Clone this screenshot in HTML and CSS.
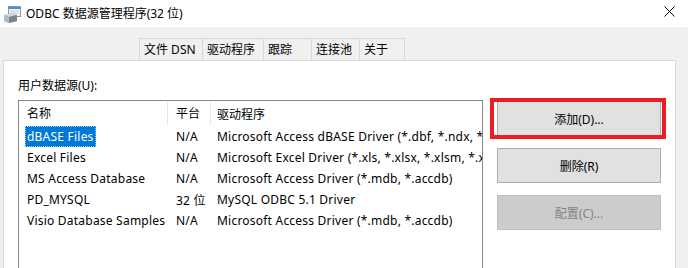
FILE: index.html
```html
<!DOCTYPE html>
<html lang="zh-CN">
<head>
<meta charset="utf-8">
<title>ODBC 数据源管理程序(32 位)</title>
<link rel="stylesheet" href="styles.css">
</head>
<body>
<div class="window">
  <div class="titlebar">
    <svg class="app-icon" width="19" height="17" viewBox="0 0 19 17">
      <rect x="5.5" y="0.5" width="12" height="10" fill="#f4f6f8" stroke="#8a96a3"/>
      <rect x="6" y="1" width="11" height="2" fill="#4a8fd6"/>
      <line x1="7" y1="5" x2="16" y2="5" stroke="#c4ccd4"/>
      <line x1="7" y1="7" x2="16" y2="7" stroke="#c4ccd4"/>
      <path d="M1 9 L9 7 L14 9 L14 15 L6 17 L1 15 Z" fill="#9aa2ab"/>
      <path d="M1 9 L9 7 L14 9 L6 11 Z" fill="#d3d8dd"/>
      <path d="M6 11 L14 9 L14 15 L6 17 Z" fill="#7b838c"/>
      <path d="M1 9 L6 11 L6 17 L1 15 Z" fill="#b2b9c0"/>
    </svg>
    <span class="title">ODBC 数据源管理程序(32 位)</span>
    <svg class="close" width="11" height="11" viewBox="0 0 11 11">
      <path d="M0.5 0.5 L10.5 10.5 M10.5 0.5 L0.5 10.5" stroke="#000" stroke-width="1"/>
    </svg>
  </div>
  <div class="tabs">
    <div class="tab w1">文件 DSN</div>
    <div class="tab w2">驱动程序</div>
    <div class="tab w3">跟踪</div>
    <div class="tab w4">连接池</div>
    <div class="tab w5">关于</div>
  </div>
  <div class="panel">
    <div class="label">用户数据源(U):</div>
    <div class="content">
      <div class="listbox">
        <div class="row header">
          <div class="c1">名称</div>
          <div class="c2">平台</div>
          <div class="c3">驱动程序</div>
        </div>
        <div class="row">
          <div class="c1"><span class="selected">dBASE Files</span></div>
          <div class="c2">N/A</div>
          <div class="c3">Microsoft Access dBASE Driver (*.dbf, *.ndx, *.mdx)</div>
        </div>
        <div class="row">
          <div class="c1">Excel Files</div>
          <div class="c2">N/A</div>
          <div class="c3">Microsoft Excel Driver (*.xls, *.xlsx, *.xlsm, *.xlsb)</div>
        </div>
        <div class="row">
          <div class="c1">MS Access Database</div>
          <div class="c2">N/A</div>
          <div class="c3">Microsoft Access Driver (*.mdb, *.accdb)</div>
        </div>
        <div class="row">
          <div class="c1">PD_MYSQL</div>
          <div class="c2">32 位</div>
          <div class="c3">MySQL ODBC 5.1 Driver</div>
        </div>
        <div class="row">
          <div class="c1">Visio Database Samples</div>
          <div class="c2">N/A</div>
          <div class="c3">Microsoft Access Driver (*.mdb, *.accdb)</div>
        </div>
      </div>
      <div class="buttons">
        <div class="btn highlight">添加(D)...<span class="mark"></span></div>
        <div class="btn">删除(R)</div>
        <div class="btn disabled">配置(C)...</div>
      </div>
    </div>
  </div>
</div>
</body>
</html>
```
FILE: styles.css
```css
* { box-sizing: border-box; }
html, body { margin: 0; padding: 0; }
body {
  width: 688px;
  height: 268px;
  overflow: hidden;
  background: #f0f0f0;
  font-family: "Noto Sans", "Noto Sans CJK SC", sans-serif;
  font-size: 12px;
  color: #000;
}
.window { width: 688px; height: 268px; overflow: hidden; }
.titlebar {
  height: 27px;
  background: #fff;
  display: flex;
  align-items: center;
}
.app-icon { margin-left: 3px; margin-top: 1px; }
.title { margin-left: 4px; line-height: 16px; }
.close { margin-left: auto; margin-right: 13px; margin-top: -5px; }
.tabs {
  display: flex;
  margin-top: 11px;
  margin-left: 139px;
  height: 23px;
}
.tab {
  border: 1px solid #d9d9d9;
  border-right: none;
  border-bottom: none;
  padding-left: 4px;
  line-height: 21px;
  white-space: nowrap;
}
.tab.w5 { border-right: 1px solid #d9d9d9; }
.w1 { width: 63px; }
.w2 { width: 61px; }
.w3 { width: 48px; }
.w4 { width: 48px; }
.w5 { width: 46px; }
.panel {
  margin-left: 3px;
  margin-top: -1px;
  width: 673px;
  height: 208px;
  background: #fff;
  border: 1px solid #d9d9d9;
  border-bottom: none;
  padding: 17px 0 0 14px;
}
.label { line-height: 16px; }
.content {
  display: flex;
  margin-top: 6px;
  gap: 14px;
}
.listbox {
  width: 465px;
  height: 168px;
  border: 1px solid #828790;
  border-bottom: none;
  overflow: hidden;
}
.row {
  display: flex;
  height: 21px;
  align-items: center;
  white-space: nowrap;
  letter-spacing: 0.22px;
}
.row.header { height: 25px; letter-spacing: 0; }
.c1 { width: 149px; padding-left: 8px; flex: none; }
.c2 { width: 43px; padding-left: 8px; flex: none; }
.c3 { flex: none; padding-left: 6px; }
.header .c1, .header .c2 {
  border-right: 1px solid #e5e5e5;
  height: 23px;
  line-height: 23px;
}
.selected {
  display: inline-block;
  margin-left: -2px;
  padding: 0 1px;
  height: 21px;
  line-height: 19px;
  background: #0078d7;
  color: #fff;
  border: 1px dotted #99c9ef;
}
.buttons {
  display: flex;
  flex-direction: column;
  gap: 12px;
  margin-top: 1px;
}
.btn {
  position: relative;
  width: 164px;
  height: 35px;
  background: #e1e1e1;
  border: 1px solid #adadad;
  display: flex;
  align-items: center;
  justify-content: center;
}
.btn.disabled {
  background: #cccccc;
  border-color: #bfbfbf;
  color: #838383;
}
.mark {
  position: absolute;
  left: -8px;
  right: -6px;
  top: -4px;
  bottom: -4px;
  border: 4px solid #ed1c24;
}
```
